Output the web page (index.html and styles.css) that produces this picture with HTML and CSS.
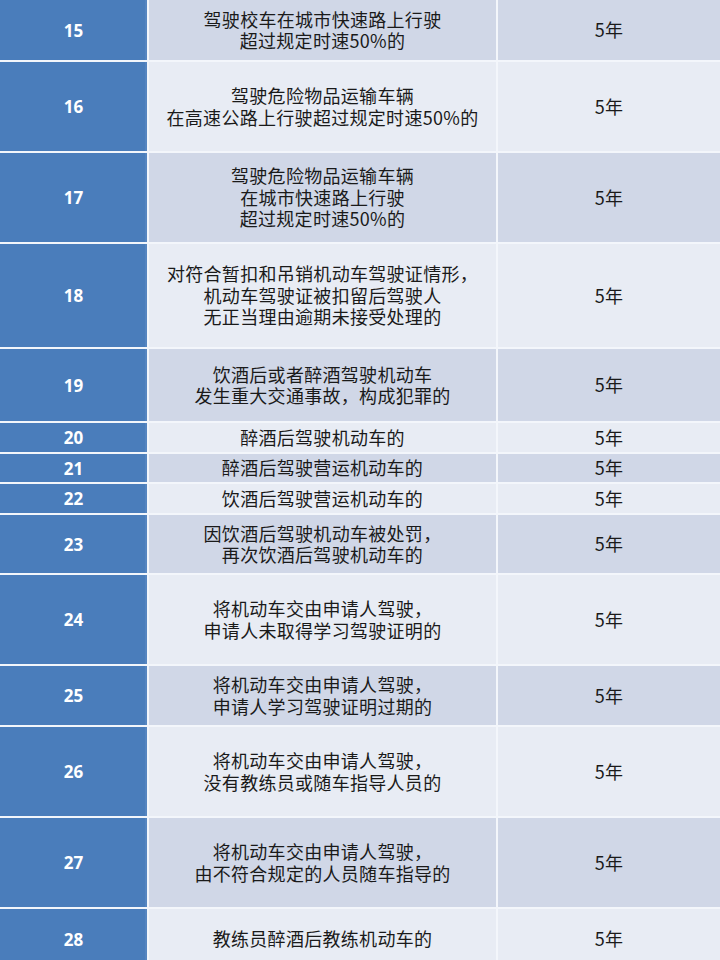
FILE: index.html
```html
<!DOCTYPE html>
<html lang="zh-CN">
<head>
<meta charset="utf-8">
<title>表格</title>
<link rel="stylesheet" href="styles.css">
</head>
<body>
<div class="table">
  <div class="num">15</div><div class="cell dark">驾驶校车在城市快速路上行驶<br>超过规定时速50%的</div><div class="cell dark">5年</div>
  <div class="num">16</div><div class="cell light">驾驶危险物品运输车辆<br>在高速公路上行驶超过规定时速50%的</div><div class="cell light">5年</div>
  <div class="num">17</div><div class="cell dark">驾驶危险物品运输车辆<br>在城市快速路上行驶<br>超过规定时速50%的</div><div class="cell dark">5年</div>
  <div class="num">18</div><div class="cell light">对符合暂扣和吊销机动车驾驶证情形，<br>机动车驾驶证被扣留后驾驶人<br>无正当理由逾期未接受处理的</div><div class="cell light">5年</div>
  <div class="num">19</div><div class="cell dark">饮酒后或者醉酒驾驶机动车<br>发生重大交通事故，构成犯罪的</div><div class="cell dark">5年</div>
  <div class="num">20</div><div class="cell light">醉酒后驾驶机动车的</div><div class="cell light">5年</div>
  <div class="num">21</div><div class="cell dark">醉酒后驾驶营运机动车的</div><div class="cell dark">5年</div>
  <div class="num">22</div><div class="cell light">饮酒后驾驶营运机动车的</div><div class="cell light">5年</div>
  <div class="num">23</div><div class="cell dark">因饮酒后驾驶机动车被处罚，<br>再次饮酒后驾驶机动车的</div><div class="cell dark">5年</div>
  <div class="num">24</div><div class="cell light">将机动车交由申请人驾驶，<br>申请人未取得学习驾驶证明的</div><div class="cell light">5年</div>
  <div class="num">25</div><div class="cell dark">将机动车交由申请人驾驶，<br>申请人学习驾驶证明过期的</div><div class="cell dark">5年</div>
  <div class="num">26</div><div class="cell light">将机动车交由申请人驾驶，<br>没有教练员或随车指导人员的</div><div class="cell light">5年</div>
  <div class="num">27</div><div class="cell dark">将机动车交由申请人驾驶，<br>由不符合规定的人员随车指导的</div><div class="cell dark">5年</div>
  <div class="num">28</div><div class="cell light">教练员醉酒后教练机动车的</div><div class="cell light">5年</div>
</div>
</body>
</html>
```

FILE: styles.css
```css
html, body {
  margin: 0;
  padding: 0;
  background: #eef2f8;
  overflow: hidden;
}

.table {
  width: 720px;
  display: grid;
  grid-template-columns: 147px 347px 222px;
  grid-template-rows: 60px 89px 89px 103px 72px 29px 28px 29px 58px 89px 59px 89px 89px 60px;
  column-gap: 2px;
  row-gap: 2px;
  background: #f3f6fb;
}

.num {
  background: #4a7dbb;
  color: #ffffff;
  font-family: "Open Sans", "Liberation Sans", sans-serif;
  font-weight: 700;
  font-size: 17px;
  display: flex;
  align-items: center;
  justify-content: center;
  box-shadow: inset -2px 0 0 #5585c0;
}

.cell {
  display: flex;
  align-items: center;
  justify-content: center;
  text-align: center;
  font-family: "Noto Sans CJK SC", "Noto Sans", sans-serif;
  font-size: 18px;
  line-height: 21.5px;
  letter-spacing: 0.3px;
  color: #1a1a1a;
}

.dark {
  background: #d0d7e7;
}

.light {
  background: #e8ecf4;
}
```
